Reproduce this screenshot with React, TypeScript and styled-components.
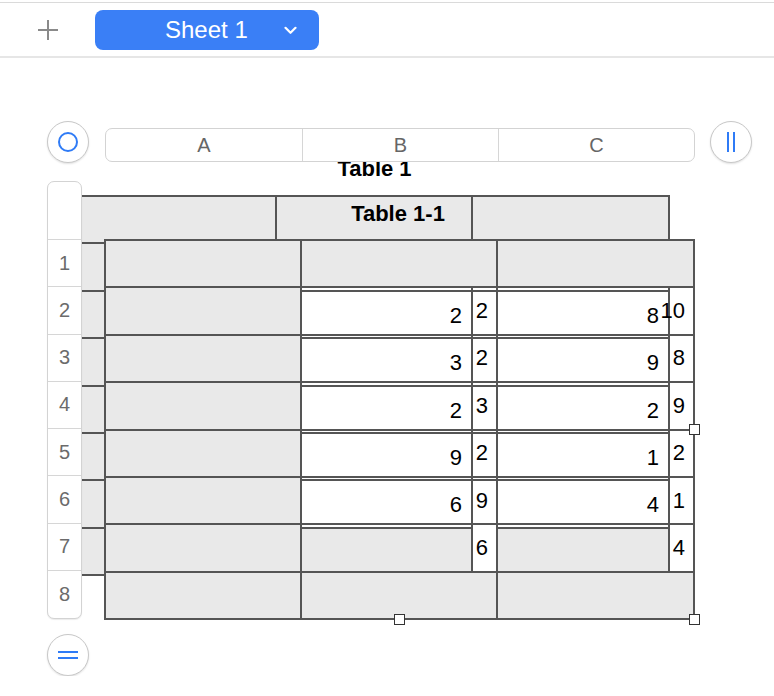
import React from "react";
import styled, { createGlobalStyle } from "styled-components";

const LINE = "#555555";
const FILL = "#e9e9e9";
const BLUE = "#2f7bf6";

const GlobalStyle = createGlobalStyle`
  html, body {
    margin: 0;
    padding: 0;
    background: #fff;
  }
  body {
    font-family: "Liberation Sans", Arial, Helvetica, sans-serif;
  }
  * {
    box-sizing: border-box;
  }
`;

const TopBar = styled.header`
  margin-top: 2px;
  height: 56px;
  border-top: 1px solid #dadada;
  border-bottom: 2px solid #e6e6e6;
  display: flex;
  align-items: center;
  padding-left: 37px;
  gap: 36px;
`;

const AddButton = styled.div`
  width: 22px;
  height: 22px;
  display: flex;
`;

const SheetTab = styled.div`
  width: 224px;
  height: 40px;
  margin-top: 1px;
  border-radius: 8px;
  background: #3a7ff6;
  color: #fff;
  display: flex;
  align-items: center;
  padding-left: 70px;
  gap: 36px;
  font-size: 24px;
`;

const Canvas = styled.main`
  padding: 63px 0 0 47px;
`;

const Board = styled.div`
  position: relative;
  display: grid;
  grid-template-columns: 57px 591px auto;
  grid-template-rows: 42px auto auto;
`;

const RoundButton = styled.div<{ $col: number; $row: number; $shift?: number; $top?: number }>`
  grid-column: ${(p) => p.$col};
  grid-row: ${(p) => p.$row};
  margin-left: ${(p) => p.$shift || 0}px;
  margin-top: ${(p) => p.$top || 0}px;
  width: 42px;
  height: 42px;
  border-radius: 50%;
  border: 1px solid #c8c8c8;
  background: #fff;
  box-shadow: 0 1px 2px rgba(0, 0, 0, 0.12);
  display: flex;
  align-items: center;
  justify-content: center;
  position: relative;
  z-index: 1;
`;

const ColumnBar = styled.div`
  grid-column: 2;
  grid-row: 1;
  margin: 7px 0 0 1px;
  width: 590px;
  height: 34px;
  display: grid;
  grid-template-columns: 197px 196px 1fr;
  border: 1px solid #d3d3d3;
  border-radius: 7px;
  background: #fff;
  position: relative;
  z-index: 1;
`;

const ColumnLabel = styled.div<{ $last?: boolean }>`
  display: flex;
  align-items: center;
  justify-content: center;
  font-size: 20px;
  color: #666;
  border-right: ${(p) => (p.$last ? "none" : "1px solid #d6d6d6")};
`;

const RowRail = styled.div`
  grid-column: 1;
  grid-row: 2;
  margin-top: 18px;
  width: 35px;
  height: 438px;
  display: grid;
  grid-template-rows: 58px repeat(8, 1fr);
  border: 1px solid #d3d3d3;
  border-radius: 7px;
  background: #fff;
  box-shadow: 0 1px 1px rgba(0, 0, 0, 0.08);
  position: relative;
  z-index: 1;
`;

const RowLabel = styled.div<{ $last?: boolean }>`
  display: flex;
  align-items: center;
  justify-content: center;
  font-size: 20px;
  color: #6b6b6b;
  border-bottom: ${(p) => (p.$last ? "none" : "1px solid #d6d6d6")};
`;

const BackLayer = styled.div`
  position: absolute;
  left: 32px;
  top: 29px;
  width: 591px;
  z-index: 0;
`;

const TableTitle = styled.div`
  height: 45px;
  padding-top: 8px;
  line-height: 22px;
  font-size: 22px;
  font-weight: bold;
  text-align: center;
  color: #000;
`;

const Sheet = styled.div`
  display: grid;
  grid-template-columns: 196px 196px 197px;
  grid-template-rows: repeat(8, 1fr);
  width: 591px;
  height: 381px;
  border-top: 2px solid ${LINE};
  border-left: 2px solid ${LINE};
`;

const FrontSheet = styled(Sheet)`
  grid-column: 2;
  grid-row: 2;
  margin-top: 76px;
  position: relative;
  z-index: 1;
`;

type Tone = "fill" | "paper" | "clear";

const Cell = styled.div<{ $tone: Tone; $pad?: number }>`
  border-right: 2px solid ${LINE};
  border-bottom: 2px solid ${LINE};
  background: ${(p) => (p.$tone === "fill" ? FILL : p.$tone === "paper" ? "#fff" : "transparent")};
  display: flex;
  justify-content: flex-end;
  align-items: center;
  min-width: 0;
  padding: ${(p) => p.$pad || 0}px 9px 0 0;
  font-size: 22px;
  color: #000;
  white-space: nowrap;
`;

const HeaderCell = styled(Cell)`
  justify-content: center;
  align-items: flex-start;
  padding: 6px 0 0 48px;
  line-height: 22px;
  font-weight: bold;
`;

const ValueCell = styled(Cell)`
  padding: 0;
`;

const Tail = styled.div<{ $solid?: boolean }>`
  width: 23px;
  align-self: stretch;
  display: flex;
  align-items: center;
  justify-content: flex-end;
  padding-right: 8px;
  background: ${(p) => (p.$solid ? "#fff" : "transparent")};
  white-space: nowrap;
`;

const Handle = styled.div<{ $x: number; $y: number }>`
  position: absolute;
  left: ${(p) => p.$x}px;
  top: ${(p) => p.$y}px;
  width: 11px;
  height: 11px;
  background: #fff;
  border: 1px solid #333;
`;

const frontB = [2, 2, 3, 2, 9, 6];
const frontC = [10, 8, 9, 2, 1, 4];
const backB = [2, 3, 2, 9, 6];
const backC = [8, 9, 2, 1, 4];
const rows = [1, 2, 3, 4, 5, 6, 7, 8];

function PlusIcon() {
  return (
    <svg width="22" height="22" viewBox="0 0 22 22">
      <path d="M11 1v20M1 11h20" stroke="#8a8a8a" strokeWidth="2" fill="none" />
    </svg>
  );
}

function Chevron() {
  return (
    <svg width="13" height="9" viewBox="0 0 13 9">
      <polyline points="1.5,1.8 6.5,6.8 11.5,1.8" stroke="#fff" strokeWidth="2.2" fill="none" strokeLinecap="round" strokeLinejoin="round" />
    </svg>
  );
}

function BackTable() {
  return (
    <BackLayer>
      <TableTitle>Table 1</TableTitle>
      <Sheet>
        {rows.map((r) => {
          if (r === 1) {
            return (
              <React.Fragment key={r}>
                <Cell $tone="fill" />
                <HeaderCell $tone="fill">Table 1-1</HeaderCell>
                <Cell $tone="fill" />
              </React.Fragment>
            );
          }
          const body = r >= 3 && r <= 7 ? r - 3 : -1;
          const tone: Tone = r === 8 ? "fill" : "paper";
          return (
            <React.Fragment key={r}>
              <Cell $tone="fill" />
              <Cell $tone={tone} $pad={3}>{body >= 0 ? backB[body] : ""}</Cell>
              <Cell $tone={tone} $pad={3}>{body >= 0 ? backC[body] : ""}</Cell>
            </React.Fragment>
          );
        })}
      </Sheet>
    </BackLayer>
  );
}

function FrontTable() {
  return (
    <FrontSheet>
      {rows.map((r) => {
        if (r === 1 || r === 8) {
          return (
            <React.Fragment key={r}>
              <Cell $tone="fill" />
              <Cell $tone="fill" />
              <Cell $tone="fill" />
            </React.Fragment>
          );
        }
        const i = r - 2;
        return (
          <React.Fragment key={r}>
            <Cell $tone="fill" />
            <ValueCell $tone="clear">
              <Tail $solid={r === 7}>{frontB[i]}</Tail>
            </ValueCell>
            <ValueCell $tone="clear">
              <Tail>{frontC[i]}</Tail>
            </ValueCell>
          </React.Fragment>
        );
      })}
      <Handle $x={583} $y={183} />
      <Handle $x={288} $y={373} />
      <Handle $x={583} $y={373} />
    </FrontSheet>
  );
}

export default function App() {
  return (
    <>
      <GlobalStyle />
      <TopBar>
        <AddButton>
          <PlusIcon />
        </AddButton>
        <SheetTab>
          <span>Sheet 1</span>
          <Chevron />
        </SheetTab>
      </TopBar>
      <Canvas>
        <Board>
          <BackTable />
          <RoundButton $col={1} $row={1}>
            <svg width="22" height="22" viewBox="0 0 22 22">
              <circle cx="11" cy="11" r="9" stroke={BLUE} strokeWidth="2" fill="none" />
            </svg>
          </RoundButton>
          <ColumnBar>
            <ColumnLabel>A</ColumnLabel>
            <ColumnLabel>B</ColumnLabel>
            <ColumnLabel $last>C</ColumnLabel>
          </ColumnBar>
          <RoundButton $col={3} $row={1} $shift={15}>
            <svg width="12" height="20" viewBox="0 0 12 20">
              <path d="M3 0v20M9 0v20" stroke={BLUE} strokeWidth="2" fill="none" />
            </svg>
          </RoundButton>
          <RowRail>
            <RowLabel />
            {rows.map((r) => (
              <RowLabel key={r} $last={r === 8}>
                {r}
              </RowLabel>
            ))}
          </RowRail>
          <FrontTable />
          <RoundButton $col={1} $row={3} $top={14}>
            <svg width="20" height="12" viewBox="0 0 20 12">
              <path d="M0 3h20M0 9h20" stroke={BLUE} strokeWidth="2" fill="none" />
            </svg>
          </RoundButton>
        </Board>
      </Canvas>
    </>
  );
}
